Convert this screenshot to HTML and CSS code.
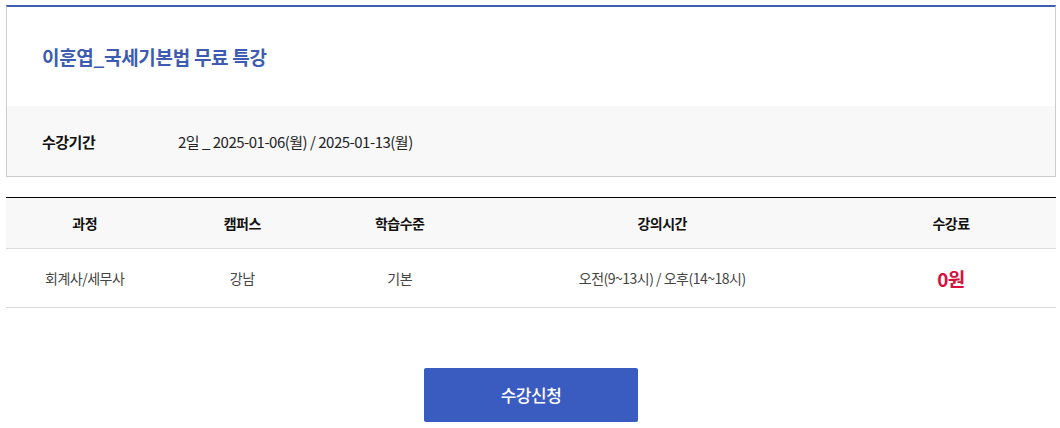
FILE: index.html
```html
<!DOCTYPE html>
<html>
<head lang="ko">
    <meta charset="UTF-8">
    <title>이훈엽_국세기본법 무료 특강</title>
    <link rel="stylesheet" href="styles.css">
</head>
<body>
<div class="wrap">
    <div class="course">
        <h2 class="course-title">이훈엽_국세기본법 무료 특강</h2>
        <div class="course-info">
            <span class="label">수강기간</span>
            <span class="value">2일 _ 2025-01-06(월) / 2025-01-13(월)</span>
        </div>
    </div>

    <table class="lecture">
        <colgroup>
            <col style="width:15%">
            <col style="width:15%">
            <col style="width:15%">
            <col style="width:35%">
            <col style="width:20%">
        </colgroup>
        <thead>
            <tr>
                <th>과정</th>
                <th>캠퍼스</th>
                <th>학습수준</th>
                <th>강의시간</th>
                <th>수강료</th>
            </tr>
        </thead>
        <tbody>
            <tr>
                <td>회계사/세무사</td>
                <td>강남</td>
                <td>기본</td>
                <td>오전(9~13시) / 오후(14~18시)</td>
                <td class="price">0원</td>
            </tr>
        </tbody>
    </table>

    <div class="btn-area">
        <a href="#" class="btn-apply">수강신청</a>
    </div>
</div>
</body>
</html>
```

FILE: styles.css
```css
* {
    margin: 0;
    padding: 0;
    box-sizing: border-box;
}
body {
    font-family: "Noto Sans CJK KR", "Noto Sans", sans-serif;
    color: #333;
    background: #fff;
}
.wrap {
    width: 1050px;
    margin-left: 6px;
    padding-top: 5px;
}
.course {
    border: 1px solid #ccc;
    border-top: 2px solid #3e5db3;
}
.course-title {
    height: 99px;
    line-height: 99px;
    padding-left: 35px;
    font-size: 19px;
    font-weight: bold;
    color: #3d5cb1;
    letter-spacing: -0.3px;
}
.course-info {
    display: flex;
    align-items: center;
    height: 70px;
    padding-left: 35px;
    background: #f8f8f8;
    font-size: 15px;
    letter-spacing: -0.5px;
}
.course-info .label {
    width: 136px;
    font-weight: bold;
    color: #111;
}
.course-info .value {
    color: #222;
}
.lecture {
    width: 100%;
    margin-top: 20px;
    border-collapse: collapse;
    table-layout: fixed;
    border-top: 1px solid #000;
    font-size: 14px;
    letter-spacing: -0.5px;
}
.lecture th {
    height: 51px;
    background: #f8f8f8;
    border-bottom: 1px solid #ddd;
    font-weight: bold;
    color: #111;
}
.lecture td {
    height: 59px;
    text-align: center;
    border-bottom: 1px solid #ddd;
    color: #444;
}
.lecture td.price {
    font-size: 19px;
    font-weight: bold;
    color: #d4123d;
}
.btn-area {
    display: flex;
    justify-content: center;
    padding-top: 60px;
}
.btn-apply {
    display: block;
    width: 214px;
    height: 54px;
    line-height: 54px;
    text-align: center;
    background: #3a5cc0;
    border-radius: 2px;
    color: #fff;
    font-size: 17px;
    font-weight: 500;
    text-decoration: none;
    letter-spacing: -0.5px;
}
```
